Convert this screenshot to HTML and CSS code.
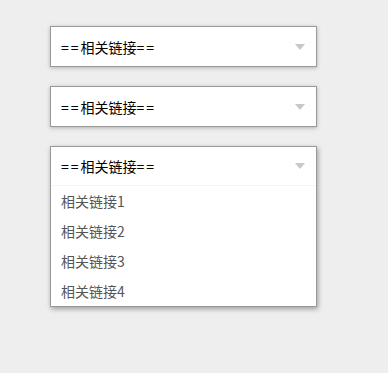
FILE: index.html
```html
<!DOCTYPE html>
<html>
<head>
<meta charset="utf-8">
<link rel="stylesheet" href="styles.css">
</head>
<body>
<div class="page">
  <div class="select">
    <div class="head"><span><span class="eq">==</span>相关链接<span class="eq">==</span></span><i class="arrow"></i></div>
  </div>
  <div class="select">
    <div class="head"><span><span class="eq">==</span>相关链接<span class="eq">==</span></span><i class="arrow"></i></div>
  </div>
  <div class="select open">
    <div class="head"><span><span class="eq">==</span>相关链接<span class="eq">==</span></span><i class="arrow"></i></div>
    <ul class="list">
      <li>相关链接1</li>
      <li>相关链接2</li>
      <li>相关链接3</li>
      <li>相关链接4</li>
    </ul>
  </div>
</div>
</body>
</html>
```
FILE: styles.css
```css
html, body {
  margin: 0;
  padding: 0;
  background: #eeeeee;
  height: 100%;
}
.page {
  padding: 26px 0 0 50px;
  display: flex;
  flex-direction: column;
  gap: 19px;
  font-family: "Noto Sans CJK SC", "Noto Sans", sans-serif;
  font-size: 14px;
}
.select {
  width: 267px;
  box-sizing: border-box;
  background: #fff;
  border: 1px solid #999;
  box-shadow: 0 1px 4px rgba(0,0,0,0.25);
}
.select.open {
  box-shadow: 1px 2px 5px rgba(0,0,0,0.35);
}
.head {
  height: 39px;
  box-sizing: border-box;
  display: flex;
  align-items: center;
  justify-content: space-between;
  padding: 0 10px;
  color: #000;
}
.eq {
  letter-spacing: 2px;
}
.open .head {
  border-bottom: 1px solid #f5f5f5;
}
.arrow {
  width: 0;
  height: 0;
  border-left: 5px solid transparent;
  border-right: 5px solid transparent;
  border-top: 6px solid #c8c8c8;
  margin-right: 1px;
}
.list {
  list-style: none;
  margin: 0;
  padding: 0;
}
.list li {
  height: 30px;
  line-height: 30px;
  padding: 0 10px;
  color: #555;
}
```
